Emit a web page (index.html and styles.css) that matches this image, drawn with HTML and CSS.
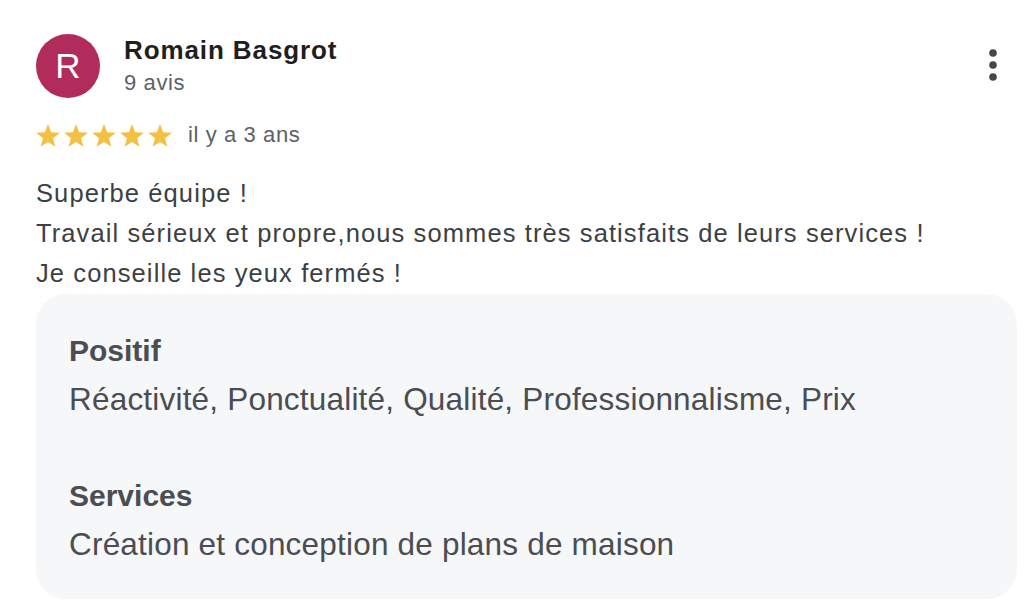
FILE: index.html
```html
<!DOCTYPE html>
<html lang="fr">
<head>
<meta charset="utf-8">
<link rel="stylesheet" href="styles.css">
</head>
<body>
<div class="review">
  <div class="header">
    <div class="avatar">R</div>
    <div class="who">
      <div class="name">Romain Basgrot</div>
      <div class="count">9 avis</div>
    </div>
    <div class="menu">
      <svg width="8" height="32" viewBox="0 0 8 32"><circle cx="4" cy="4" r="3.8" fill="#444746"/><circle cx="4" cy="16" r="3.8" fill="#444746"/><circle cx="4" cy="28" r="3.8" fill="#444746"/></svg>
    </div>
  </div>
  <div class="rating">
    <div class="stars">
      <svg viewBox="0 0 24 23" class="star"><path d="M12 0L15.12 8.33L24 8.72L17.04 14.26L19.42 22.83L12 17.92L4.58 22.83L6.96 14.26L0 8.72L8.88 8.33Z"/></svg>
      <svg viewBox="0 0 24 23" class="star"><path d="M12 0L15.12 8.33L24 8.72L17.04 14.26L19.42 22.83L12 17.92L4.58 22.83L6.96 14.26L0 8.72L8.88 8.33Z"/></svg>
      <svg viewBox="0 0 24 23" class="star"><path d="M12 0L15.12 8.33L24 8.72L17.04 14.26L19.42 22.83L12 17.92L4.58 22.83L6.96 14.26L0 8.72L8.88 8.33Z"/></svg>
      <svg viewBox="0 0 24 23" class="star"><path d="M12 0L15.12 8.33L24 8.72L17.04 14.26L19.42 22.83L12 17.92L4.58 22.83L6.96 14.26L0 8.72L8.88 8.33Z"/></svg>
      <svg viewBox="0 0 24 23" class="star"><path d="M12 0L15.12 8.33L24 8.72L17.04 14.26L19.42 22.83L12 17.92L4.58 22.83L6.96 14.26L0 8.72L8.88 8.33Z"/></svg>
    </div>
    <span class="date">il y a 3 ans</span>
  </div>
  <div class="text">
    <p>Superbe équipe !</p>
    <p>Travail sérieux et propre,nous sommes très satisfaits de leurs services !</p>
    <p>Je conseille les yeux fermés !</p>
  </div>
  <div class="details">
    <div class="section">
      <div class="label">Positif</div>
      <div class="value">Réactivité, Ponctualité, Qualité, Professionnalisme, Prix</div>
    </div>
    <div class="section">
      <div class="label">Services</div>
      <div class="value">Création et conception de plans de maison</div>
    </div>
  </div>
</div>
</body>
</html>
```
FILE: styles.css
```css
html, body {
  margin: 0;
  padding: 0;
  background: #ffffff;
}
body {
  font-family: "Liberation Sans", Arial, sans-serif;
}
.review {
  padding: 34px 13px 0 36px;
}
.header {
  display: flex;
  align-items: flex-start;
}
.avatar {
  width: 64px;
  height: 64px;
  border-radius: 50%;
  background: #b12b5b;
  color: #ffffff;
  font-size: 35px;
  line-height: 64px;
  text-align: center;
  flex-shrink: 0;
}
.who {
  margin-left: 24px;
  flex: 1;
}
.name {
  font-size: 26px;
  font-weight: bold;
  color: #1f1f1f;
  line-height: 32px;
  letter-spacing: 0.9px;
}
.count {
  font-size: 22px;
  color: #5e6166;
  line-height: 34px;
  letter-spacing: 0.6px;
}
.menu {
  padding-top: 15px;
  padding-right: 20px;
}
.menu svg {
  display: block;
}
.rating {
  display: flex;
  align-items: center;
  margin-top: 23px;
  height: 24px;
}
.stars {
  display: flex;
  gap: 4px;
}
.star {
  display: block;
  width: 24px;
  height: 23px;
  fill: #f4c043;
}
.date {
  margin-left: 16px;
  font-size: 22px;
  color: #5e6166;
  letter-spacing: 0.6px;
}
.text {
  margin-top: 26px;
  font-size: 25.5px;
  color: #3c3f43;
  letter-spacing: 1.1px;
}
.text p {
  margin: 0;
  line-height: 40px;
}
.details {
  margin-top: 1px;
  background: #f6f7f9;
  border-radius: 30px;
  padding: 39px 33px 33px 33px;
}
.section + .section {
  margin-top: 57px;
}
.label {
  font-size: 30px;
  font-weight: bold;
  color: #4a4d52;
  line-height: 36px;
}
.value {
  margin-top: 8px;
  font-size: 31.5px;
  color: #4a4d52;
  line-height: 44px;
  letter-spacing: 0.2px;
}
```
